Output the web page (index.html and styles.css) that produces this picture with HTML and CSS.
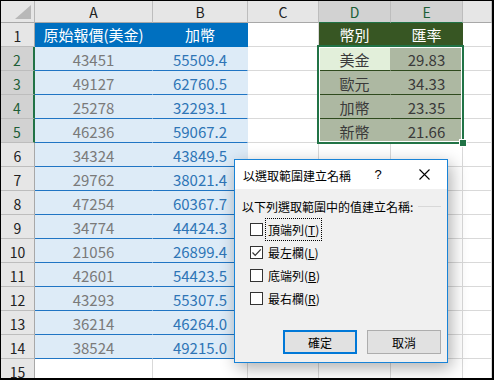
FILE: index.html
```html
<!DOCTYPE html>
<html lang="zh-Hant">
<head>
<meta charset="utf-8">
<link rel="stylesheet" href="styles.css">
</head>
<body>
<div class="frame">
  <div class="sheet">
    <div class="c corner"></div>
    <div class="c ch">A</div>
    <div class="c ch">B</div>
    <div class="c ch">C</div>
    <div class="c ch sel">D</div>
    <div class="c ch sel">E</div>
    <div class="c ch"></div>

    <div class="c rh">1</div>
    <div class="c th">原始報價(美金)</div>
    <div class="c th">加幣</div>
    <div class="c"></div>
    <div class="c gh">幣別</div>
    <div class="c gh">匯率</div>
    <div class="c"></div>

    <div class="c rh sel">2</div>
    <div class="c ta">43451</div>
    <div class="c tb">55509.4</div>
    <div class="c"></div>
    <div class="c gd active">美金</div>
    <div class="c gd">29.83</div>
    <div class="c"></div>

    <div class="c rh sel">3</div>
    <div class="c ta">49127</div>
    <div class="c tb">62760.5</div>
    <div class="c"></div>
    <div class="c gd">歐元</div>
    <div class="c gd">34.33</div>
    <div class="c"></div>

    <div class="c rh sel">4</div>
    <div class="c ta">25278</div>
    <div class="c tb">32293.1</div>
    <div class="c"></div>
    <div class="c gd">加幣</div>
    <div class="c gd">23.35</div>
    <div class="c"></div>

    <div class="c rh sel">5</div>
    <div class="c ta">46236</div>
    <div class="c tb">59067.2</div>
    <div class="c"></div>
    <div class="c gd">新幣</div>
    <div class="c gd">21.66</div>
    <div class="c"></div>

    <div class="c rh">6</div>
    <div class="c ta">34324</div>
    <div class="c tb">43849.5</div>
    <div class="c"></div><div class="c"></div><div class="c"></div><div class="c"></div>

    <div class="c rh">7</div>
    <div class="c ta">29762</div>
    <div class="c tb">38021.4</div>
    <div class="c"></div><div class="c"></div><div class="c"></div><div class="c"></div>

    <div class="c rh">8</div>
    <div class="c ta">47254</div>
    <div class="c tb">60367.7</div>
    <div class="c"></div><div class="c"></div><div class="c"></div><div class="c"></div>

    <div class="c rh">9</div>
    <div class="c ta">34774</div>
    <div class="c tb">44424.3</div>
    <div class="c"></div><div class="c"></div><div class="c"></div><div class="c"></div>

    <div class="c rh">10</div>
    <div class="c ta">21056</div>
    <div class="c tb">26899.4</div>
    <div class="c"></div><div class="c"></div><div class="c"></div><div class="c"></div>

    <div class="c rh">11</div>
    <div class="c ta">42601</div>
    <div class="c tb">54423.5</div>
    <div class="c"></div><div class="c"></div><div class="c"></div><div class="c"></div>

    <div class="c rh">12</div>
    <div class="c ta">43293</div>
    <div class="c tb">55307.5</div>
    <div class="c"></div><div class="c"></div><div class="c"></div><div class="c"></div>

    <div class="c rh">13</div>
    <div class="c ta">36214</div>
    <div class="c tb">46264.0</div>
    <div class="c"></div><div class="c"></div><div class="c"></div><div class="c"></div>

    <div class="c rh">14</div>
    <div class="c ta">38524</div>
    <div class="c tb">49215.0</div>
    <div class="c"></div><div class="c"></div><div class="c"></div><div class="c"></div>

    <div class="c rh">15</div>
    <div class="c"></div><div class="c"></div><div class="c"></div><div class="c"></div><div class="c"></div><div class="c"></div>
  </div>

  <div class="selection"><span class="handle"></span></div>

  <div class="dialog">
    <div class="titlebar">
      <span class="title">以選取範圍建立名稱</span>
      <span class="tbtn">?</span>
      <span class="tbtn close">
        <svg width="11" height="11" viewBox="0 0 11 11"><path d="M0.5 0.5L10.5 10.5M10.5 0.5L0.5 10.5" stroke="#000" stroke-width="1.1" fill="none"/></svg>
      </span>
    </div>
    <div class="dbody">
      <div class="group">
        <span>以下列選取範圍中的值建立名稱:</span>
        <span class="gline"></span>
      </div>
      <div class="opts">
        <div class="opt"><span class="box"></span><span class="lbl focus">頂端列(<u>T</u>)</span></div>
        <div class="opt"><span class="box"><svg width="11" height="11" viewBox="0 0 11 11"><path d="M1.5 5.5L4.2 8.3L9.8 2.3" stroke="#333" stroke-width="1.2" fill="none"/></svg></span><span class="lbl">最左欄(<u>L</u>)</span></div>
        <div class="opt"><span class="box"></span><span class="lbl">底端列(<u>B</u>)</span></div>
        <div class="opt"><span class="box"></span><span class="lbl">最右欄(<u>R</u>)</span></div>
      </div>
      <div class="buttons">
        <span class="btn primary">確定</span>
        <span class="btn">取消</span>
      </div>
    </div>
  </div>
</div>
</body>
</html>
```

FILE: styles.css
```css
body {
  margin: 0;
  background: #fff;
}

.frame {
  width: 494px;
  height: 380px;
  box-sizing: border-box;
  border: 1px solid #000;
  border-right-width: 2px;
  border-bottom-width: 2px;
  position: relative;
  overflow: hidden;
  font-family: "Noto Sans CJK TC", "Noto Sans", sans-serif;
}

.sheet {
  display: grid;
  grid-template-columns: 34px 118px 95px 71px 72px 72px 1fr;
  grid-template-rows: 22px repeat(15, 24px);
}

.c {
  box-sizing: border-box;
  border-right: 1px solid #d9d9d9;
  border-bottom: 1px solid #d9d9d9;
  display: flex;
  align-items: center;
  justify-content: center;
  font-size: 15px;
  white-space: nowrap;
  background: #fff;
  color: #333;
  line-height: 1;
}

.corner {
  background: #e6e6e6;
  border-right-color: #b6b6b6;
  border-bottom-color: #a8a8a8;
  position: relative;
}
.corner::after {
  content: "";
  position: absolute;
  right: 3px;
  bottom: 3px;
  width: 16px;
  height: 14px;
  background: #b8b8b8;
  clip-path: polygon(100% 0, 100% 100%, 0 100%);
}

.ch {
  background: #e6e6e6;
  border-right-color: #bdbdbd;
  border-bottom-color: #a8a8a8;
  font-size: 14px;
  color: #222;
}
.ch.sel {
  background: #d2d2d2;
  color: #1d5e37;
  border-bottom-color: #217346;
}

.rh {
  background: #e6e6e6;
  border-right-color: #a8a8a8;
  border-bottom-color: #bdbdbd;
  font-size: 14px;
  color: #222;
  padding-top: 2px;
}
.rh.sel {
  background: #d2d2d2;
  color: #1d5e37;
  border-right: 2px solid #217346;
}

.th {
  background: #0070c0;
  color: #fff;
  border-right-color: #0070c0;
  border-bottom-color: #0070c0;
}
.ta, .tb {
  background: #ddebf7;
  border-right-color: #ddebf7;
  border-bottom-color: #1f75c4;
  padding-top: 1px;
}
.ta { color: #7a7a7a; }
.tb { color: #2e75b6; }

.gh {
  background: #375623;
  color: #fff;
  border-right-color: #375623;
  border-bottom-color: #375623;
}
.gd {
  background: #adb8a2;
  color: #3a3a3a;
  border-right-color: #adb8a2;
  border-bottom-color: #2f4a1e;
  padding-top: 1px;
}
.gd.active {
  background: #e2efda;
  border-right-color: #adb8a2;
}

.selection {
  position: absolute;
  left: 316px;
  top: 44px;
  width: 147px;
  height: 99px;
  box-sizing: border-box;
  border: 2px solid #217346;
  box-shadow: inset 0 0 0 1px #fff;
  z-index: 2;
}
.handle {
  position: absolute;
  right: -5px;
  bottom: -5px;
  width: 6px;
  height: 6px;
  background: #217346;
  border: 1px solid #fff;
}

.dialog {
  position: absolute;
  left: 233px;
  top: 158px;
  width: 214px;
  height: 204px;
  box-sizing: border-box;
  border: 1px solid #1883d7;
  background: #f0f0f0;
  box-shadow: 3px 5px 16px rgba(0, 0, 0, 0.32);
  z-index: 5;
  display: flex;
  flex-direction: column;
  font-size: 12px;
  color: #000;
}

.titlebar {
  height: 29px;
  background: #fff;
  display: flex;
  align-items: center;
  padding-left: 8px;
}
.title {
  flex: 1;
  padding-top: 1px;
}
.tbtn {
  width: 46px;
  height: 29px;
  display: flex;
  align-items: center;
  justify-content: center;
  font-size: 13px;
  font-family: "Liberation Sans", sans-serif;
}
.close {
  width: 46px;
}

.dbody {
  flex: 1;
  display: flex;
  flex-direction: column;
  padding: 10px 6px 8px 7px;
}

.group {
  display: flex;
  align-items: center;
  height: 14px;
}
.gline {
  flex: 1;
  height: 1px;
  background: #d8d8d8;
  margin: 0 0 0 5px;
}

.opts {
  display: flex;
  flex-direction: column;
  padding: 10px 0 0 8px;
  gap: 10px;
}
.opt {
  display: flex;
  align-items: center;
  height: 13px;
}
.box {
  width: 13px;
  height: 13px;
  box-sizing: border-box;
  border: 1px solid #333;
  background: #fff;
  display: flex;
  align-items: center;
  justify-content: center;
}
.lbl {
  margin-left: 2px;
  padding: 2px 2px;
  border: 1px solid transparent;
}
.lbl.focus {
  border: 1px dotted #000;
}

.buttons {
  margin-top: auto;
  display: flex;
  justify-content: flex-end;
  gap: 10px;
}
.btn {
  width: 74px;
  height: 24px;
  box-sizing: border-box;
  border: 1px solid #adadad;
  background: #e1e1e1;
  display: flex;
  align-items: center;
  justify-content: center;
}
.btn.primary {
  border: 2px solid #0078d7;
}
```
